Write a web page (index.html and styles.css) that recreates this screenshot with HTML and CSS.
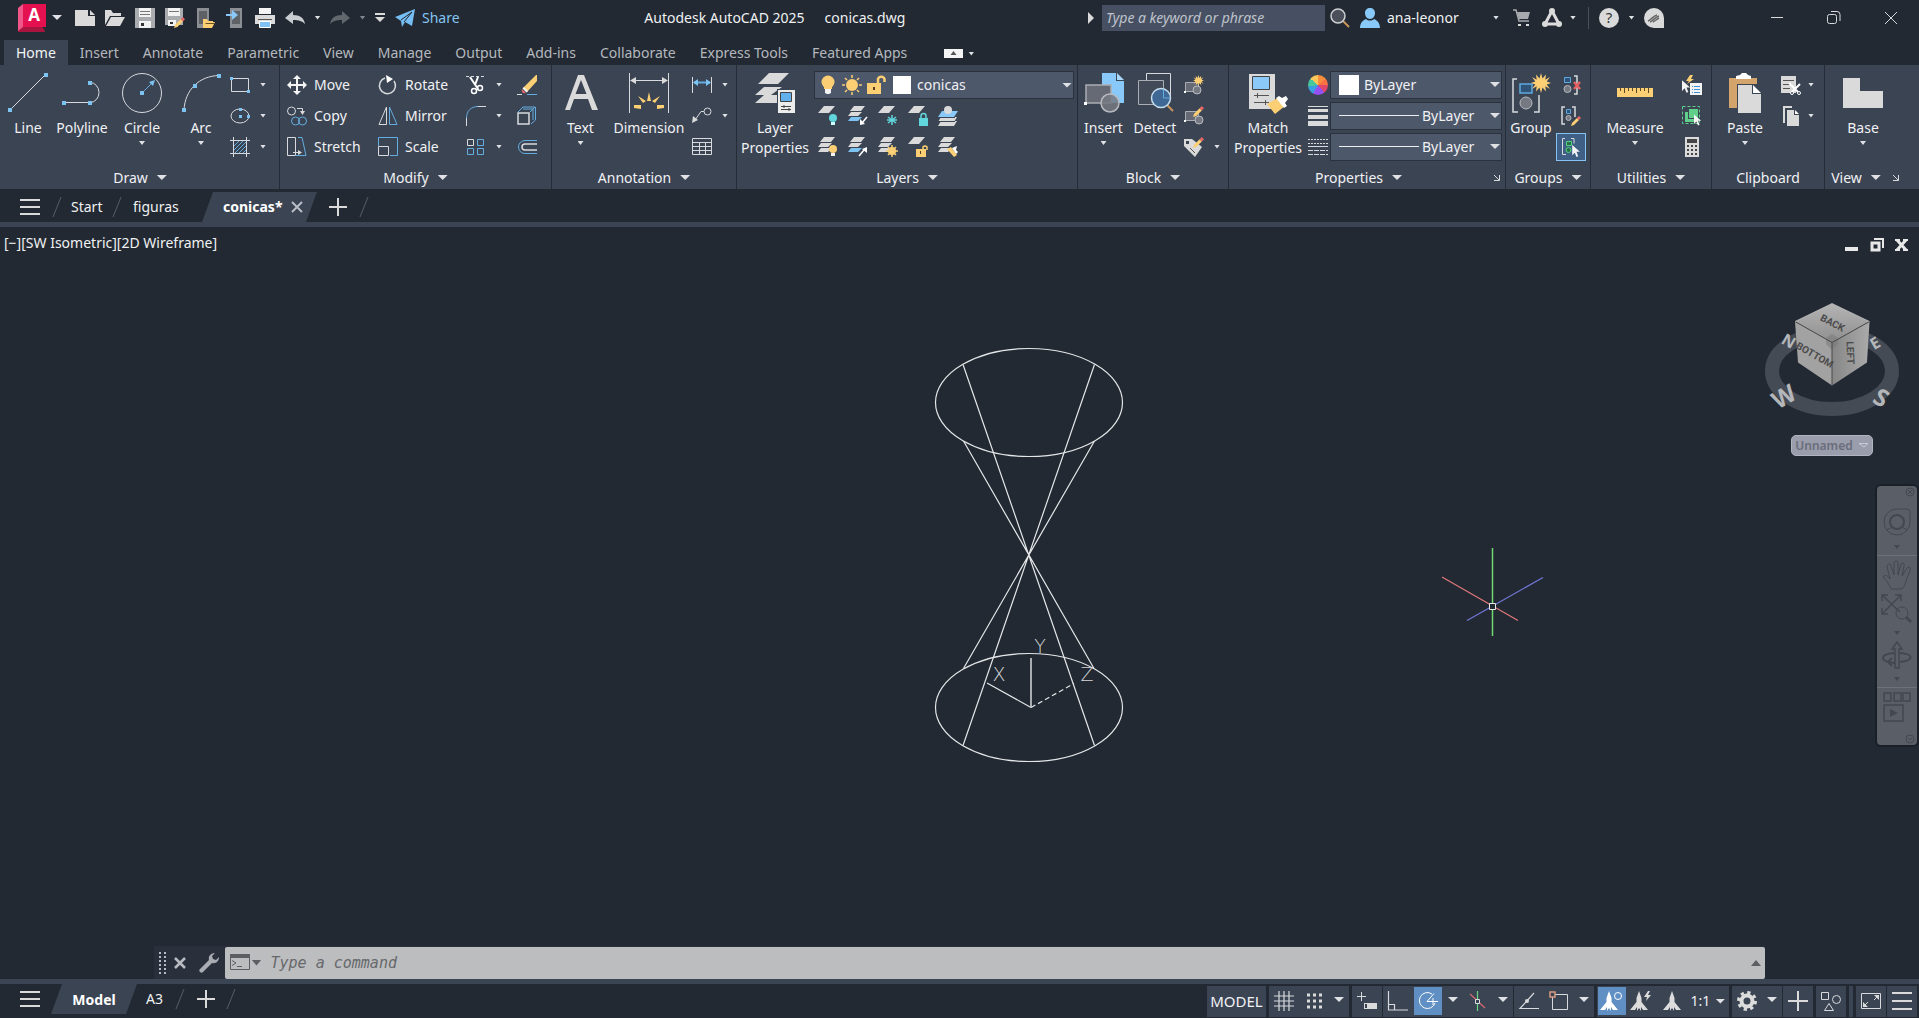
FILE: index.html
```html
<!DOCTYPE html>
<html lang="en">
<head>
<meta charset="utf-8">
<title>Autodesk AutoCAD 2025 - conicas.dwg</title>
<link rel="stylesheet" href="styles.css">
</head>
<body>
<svg class="sprite" aria-hidden="true">
  <symbol id="sheet" viewBox="0 0 20 20"><path class="fw" d="M6 0h11l-6 7H0z"/></symbol>
  <symbol id="stack" viewBox="0 0 20 20"><path class="fw" d="M6 0h11l-4 5H2zM3 6h11l-4 4H0zM3 11h11l-4 4H0z"/></symbol>
  <symbol id="stackb" viewBox="0 0 20 20"><path class="fw" d="M6 0h11l-4 5H2zM3 6h11l-4 4H0z"/><path class="fb" d="M3 11h11l-4 4H0z"/></symbol>
  <symbol id="pencil" viewBox="0 0 10 10"><path class="fy" d="M0 10l1-3 5-5 2 2-5 5z"/><path class="fr" d="M6 2l2-2 2 2-2 2z"/></symbol>
  <symbol id="star" viewBox="0 0 20 20"><path class="fy" d="M10 0l1.500 5.500L15 1.500l-.7 5.200L19 4l-3.300 4.500L20 10l-4.300 1.500L19 16l-4.700-2.700.7 5.200-3.500-4L10 20l-1.500-5.500-3.500 4 .7-5.200L1 16l3.300-4.500L0 10l4.300-1.500L1 4l4.700 2.700L5 1.500l3.500 4z"/></symbol>
  <symbol id="cursor" viewBox="0 0 10 14"><path fill="#f4f4f4" d="M0 0v12l3-3 2 5 2-1-2-5h4z"/></symbol>
  <symbol id="person" viewBox="0 0 20 20"><path class="fs" d="M10 0c3 0 5 2 5 5s-2 6-5 6-5-3-5-6 2-5 5-5zM0 20c0-5 3-8 6-9 2 2 6 2 8 0 3 1 6 4 6 9z"/></symbol>
  <symbol id="annot" viewBox="0 0 20 20"><path d="M10 0l2.500 7v4L19 19h-5l-2-3v4l-2-3-2 3v-4l-2 3H1l6.500-8V7z"/></symbol>
</svg>

<header class="titlebar">
  <button class="logo" aria-label="Application menu"><svg width="30" height="28"><path fill="#a8153e" d="M3 3L27 25l1 3-27 0z"/><path fill="#f0568a" d="M1 4l5-4v23l-5 4z"/><path fill="#e51050" d="M6 0h23v23H6z"/><text x="17" y="17" text-anchor="middle" class="logo-a">A</text></svg></button>
  <button class="dd logo-dd" aria-label="Menu options"><i class="caret mid"></i></button>
  <button class="qa" aria-label="New"><svg width="20" height="20"><path class="fw" d="M0 2h13v6h7v10H0z"/><path class="fw" d="M15 2l5 5h-5z"/></svg></button>
  <button class="qa" aria-label="Open"><svg width="20" height="20"><path class="fw" d="M0 17V2h6l2 3h8v3H5z"/><path class="fw" d="M6 9h14l-5 9H1z"/></svg></button>
  <button class="qa" aria-label="Save"><svg width="20" height="20"><path fill="#a9abae" d="M0 0h20v20H0z"/><path fill="#f2f2f2" d="M4 0h12v9H4z"/><path fill="#777" d="M5 3h10v1H5zM5 6h10v1H5z"/><path fill="#f2f2f2" d="M4 13h12v7H4z"/><path fill="#333" d="M6 15h3v3H6z"/></svg></button>
  <button class="qa" aria-label="Save as"><svg width="20" height="20"><path fill="#a9abae" d="M0 0h18v17H0z"/><path fill="#f2f2f2" d="M3 0h12v8H3z"/><path fill="#777" d="M4 3h10v1H4z"/><path fill="#f2f2f2" d="M3 12h8v6H3z"/><path fill="#333" d="M5 14h3v2H5z"/><use href="#pencil" x="9" y="9" width="11" height="11"/></svg></button>
  <button class="qa" aria-label="Open from web and mobile"><svg width="20" height="20"><path fill="#8b8e92" d="M2 0h12v20H2z"/><path fill="#5e6166" d="M4 3h8v13H4z"/><path class="fy" d="M8 11h4l1 2h5v1h2l-3 6H8z"/><path fill="#6b5020" d="M11 15h8v1h-9z"/></svg></button>
  <button class="qa" aria-label="Save to web and mobile"><svg width="20" height="20"><path fill="#8b8e92" d="M5 0h12v20H5z"/><path fill="#5e6166" d="M7 3h8v13H7z"/><path class="fs" d="M1 6h6V2l6 5-6 5V8H1z"/></svg></button>
  <button class="qa" aria-label="Plot"><svg width="20" height="20"><path fill="#f4f4f4" d="M4 0h12v6H4z"/><path class="fw" d="M0 7h20v9H0z"/><path fill="#555" d="M3 11h14v1H3z"/><path fill="#7fc1f5" stroke="#fff" d="M4.500 13.500h11v6h-11z"/></svg></button>
  <button class="qa" aria-label="Undo"><svg width="20" height="20"><path fill="#c9ccd0" d="M0 10l8-7v4c7 0 11 3 12 9-3-3-6-4-12-4v4z"/></svg></button>
  <button class="dd tight" aria-label="Undo list"><i class="caret"></i></button>
  <button class="qa" aria-label="Redo"><svg width="20" height="20"><path fill="#62676e" d="M20 10l-8-7v4C5 7 1 10 0 16c3-3 6-4 12-4v4z"/></svg></button>
  <button class="dd tight" aria-label="Redo list"><i class="caret dim"></i></button>
  <button class="dd" aria-label="Customize quick access"><svg width="10" height="10"><path class="fw" d="M0 0h10v2H0zM0 4h10L5 9z"/></svg></button>
  <button class="share"><svg width="20" height="20"><path fill="#75bdf3" d="M0 9L20 1l-3 17-7-4-3 5-1-6z"/><path fill="none" stroke="#222932" d="M6 12L17 4 9 14"/></svg>Share</button>
  <div class="doc-title"><span>Autodesk AutoCAD 2025</span><span>conicas.dwg</span></div>
  <button class="search-toggle" aria-label="Collapse search"><svg width="7" height="12"><path class="fw" d="M0 0l6 6-6 6z"/></svg></button>
  <input class="search" type="text" aria-label="Search" placeholder="Type a keyword or phrase">
  <button class="qa" aria-label="Find"><svg width="20" height="20"><path stroke="#c9965c" stroke-width="2" d="M13 13l6 6"/><circle cx="8" cy="8" r="7" fill="#4a4f59" stroke="#ced0d3" stroke-width="1.500"/></svg></button>
  <button class="user"><svg width="20" height="20"><use href="#person"/></svg><span>ana-leonor</span><i class="caret"></i></button>
  <button class="cart" aria-label="Store"><svg width="18" height="18"><path fill="none" stroke="#a7aaae" stroke-width="1.500" d="M0 1h3l3 11h10"/><path fill="#a7aaae" d="M4 3h13l-2 7H6z"/><path class="fw" d="M5 15h3v2H5zM13 15h3v2h-3z"/></svg></button>
  <button class="apps" aria-label="App store"><svg width="20" height="20"><path fill="none" stroke="#dcdcdc" stroke-width="3" stroke-linejoin="round" d="M10 3L3 16h14z"/><g class="fw"><circle cx="10" cy="3" r="3"/><circle cx="3" cy="16" r="3"/><circle cx="17" cy="16" r="3"/></g></svg><i class="caret"></i></button>
  <span class="sep"></span>
  <button class="qa" aria-label="Help"><svg width="20" height="20"><circle cx="10" cy="10" r="10" class="fw"/><text x="10" y="15" text-anchor="middle" class="help-q">?</text></svg></button>
  <button class="dd tight" aria-label="Help list"><i class="caret"></i></button>
  <button class="qa" aria-label="Assistant"><svg width="20" height="20"><path class="fw" d="M10 0a10 10 0 0 1 10 10v10H10a10 10 0 0 1 0-20z"/><path fill="none" stroke="#666" stroke-width="1.500" d="M4 13c3-1 5-5 9-6M6 14c3-1 5-5 9-6M9 14c2-1 4-3 6-4"/></svg></button>
  <span class="grow"></span>
  <button class="win" aria-label="Minimize"><svg width="14" height="14"><path class="w" d="M1 6.500h12"/></svg></button>
  <button class="win" aria-label="Restore"><svg width="14" height="14"><rect class="w" x=".5" y="3.500" width="9" height="9" rx="2"/><path class="w" d="M4 .5h6a3 3 0 0 1 3 3V10"/></svg></button>
  <button class="win" aria-label="Close"><svg width="14" height="14"><path class="w" d="M1 1l12 12M13 1L1 13"/></svg></button>
</header>

<nav class="tabs">
  <a href="#" class="on">Home</a><a href="#">Insert</a><a href="#">Annotate</a><a href="#">Parametric</a><a href="#">View</a><a href="#">Manage</a><a href="#">Output</a><a href="#">Add-ins</a><a href="#">Collaborate</a><a href="#">Express Tools</a><a href="#">Featured Apps</a>
  <button class="ribbon-toggle" aria-label="Minimize ribbon"><svg width="19" height="9"><path fill="#f4f4f4" d="M0 0h19v9H0z"/><path fill="#555" d="M9.500 2l3 4h-6z"/></svg><i class="caret"></i></button>
</nav>

<main class="ribbon">
  <section class="panel draw">
    <div class="body">
      <button class="big"><svg width="40" height="40"><path class="w" d="M2 37L37 2"/><path class="fb" d="M0 35h4v4H0zM36 0h4v4h-4z"/></svg><span>Line</span></button>
      <button class="big"><svg width="40" height="40"><path class="w" d="M2 29.500h26a9 10 0 0 0 0-20"/><path class="fb" d="M0 28h4v4H0zM26 28h4v4h-4zM26 8h4v4h-4z"/></svg><span>Polyline</span></button>
      <button class="big"><svg width="40" height="40"><circle class="w" cx="20" cy="20" r="19.500"/><path class="b" d="M20 20L31 9"/><path class="fb" d="M18 18h4v4h-4zM27 9l6-2-2 6z"/></svg><span>Circle</span><i class="caret"></i></button>
      <button class="big"><svg width="40" height="40"><path class="w" d="M3 37C4 17 18 3 38 2.500"/><path class="fb" d="M1 35h4v4H1zM12 11h4v4h-4zM36 1h4v4h-4z"/></svg><span>Arc</span><i class="caret"></i></button>
      <div class="stackcol">
        <div class="row"><button class="ib" aria-label="Rectangle"><svg width="20" height="20"><path class="w" d="M1.500 3.500h17v13h-17z"/><path class="fb" d="M0 2h3v3H0zM17 15h3v3h-3z"/></svg></button><button class="dd" aria-label="Rectangle list"><i class="caret"></i></button></div>
        <div class="row"><button class="ib" aria-label="Ellipse"><svg width="20" height="20"><ellipse class="w" cx="10" cy="10" rx="9" ry="7"/><path class="fb" d="M9 9h3v3H9zM9 2h3v3H9zM17 9h3v3h-3z"/></svg></button><button class="dd" aria-label="Ellipse list"><i class="caret"></i></button></div>
        <div class="row"><button class="ib" aria-label="Hatch"><svg width="20" height="20"><path class="w" d="M3.500 0v20M16.500 0v20M0 3.500h20M0 16.500h20"/><path class="b" d="M4 9l5-5M4 13l9-9M5 16L16 5M9 16l7-7M13 16l3-3"/></svg></button><button class="dd" aria-label="Hatch list"><i class="caret"></i></button></div>
      </div>
    </div>
    <footer><button class="ttl">Draw<i class="caret wide"></i></button></footer>
  </section>

  <section class="panel modify">
    <div class="body">
      <button class="lb"><svg width="20" height="20"><path fill="#f4f4f4" d="M10 0l4 4h-3v5h5V6l4 4-4 4v-3h-5v5h3l-4 4-4-4h3v-5H4v3l-4-4 4-4v3h5V4H6z"/></svg>Move</button>
      <button class="lb"><svg width="20" height="20"><path class="w" stroke-width="1.500" d="M7 3a8 8 0 1 0 9 3"/><path fill="#fff" d="M8 0l7 4-6 4z"/></svg>Rotate</button>
      <button class="ib s" aria-label="Trim"><svg width="20" height="20"><path class="w" stroke-dasharray="3 2" d="M0 1.500h20"/><path fill="none" stroke="#fff" stroke-width="2" d="M4 2l8 12M12 2l-3 8"/><circle fill="none" stroke="#fff" stroke-width="1.500" cx="8" cy="16" r="2.500"/><circle fill="none" stroke="#fff" stroke-width="1.500" cx="14" cy="13" r="2.500"/></svg></button>
      <button class="dd" aria-label="Trim list"><i class="caret"></i></button>
      <button class="ib s" aria-label="Erase"><svg width="20" height="20"><path class="w" d="M0 19.500h5"/><path class="b" d="M10 19.500h10"/><path class="fy" d="M19 0h1v6L10 17l-4-4z"/><path fill="#f4f4f4" d="M7 12l4 4-1.500 1.500-4-4z"/><path class="fr" d="M5 14l4 4c-3 1-5-1-4-4z"/></svg></button>
      <button class="lb"><svg width="20" height="20"><circle class="w" cx="4.500" cy="5" r="4"/><path class="w" d="M10 2.500h5.500V7"/><path class="fw" d="M13 5h5l-2.500 4z"/><circle class="b" cx="8.500" cy="15" r="4"/><circle class="b" cx="15.500" cy="15" r="4"/></svg>Copy</button>
      <button class="lb"><svg width="20" height="20"><path class="w" d="M8.500 1v17.500H1z"/><path class="b" d="M11.500 1v17.500H19z"/></svg>Mirror</button>
      <button class="ib s" aria-label="Fillet"><svg width="20" height="20"><path class="w" d="M.5 20v-8M10 .5h10"/><path class="b" d="M.5 12C.5 5 5 .5 12 .5"/></svg></button>
      <button class="dd" aria-label="Fillet list"><i class="caret"></i></button>
      <button class="ib s" aria-label="Explode"><svg width="20" height="20"><path class="w" stroke-width="1.500" d="M1 7h11v11H1z"/><path class="b" d="M1 6l5-5h12l-5 5M6 3h10M18.500 1v13L14 18M16 3v11"/></svg></button>
      <button class="lb"><svg width="20" height="20"><path class="w" d="M.5 18.500V.5h8v18zM6 15.500h7"/><path class="b" d="M11 .5h4l4 18H8.500"/><path class="fw" d="M11 13l4 2.500-4 2.500z"/></svg>Stretch</button>
      <button class="lb"><svg width="20" height="20"><path class="b" d="M.5 9V.5h19v18H12"/><path class="w" d="M.5 9.500h10v9H.5z"/></svg>Scale</button>
      <button class="ib s" aria-label="Array"><svg width="20" height="20"><path class="w" d="M1.500 2.500h6v6h-6z"/><path class="b" d="M11.500 2.500h6v6h-6zM1.500 11.500h6v6h-6zM11.500 11.500h6v6h-6z"/></svg></button>
      <button class="dd" aria-label="Array list"><i class="caret"></i></button>
      <button class="ib s" aria-label="Offset"><svg width="20" height="20"><path class="b" d="M20 3.500H8a6.500 6.500 0 0 0 0 13h12"/><path class="w" stroke-width="1.500" d="M20 7H8a3 3 0 0 0 0 6h12"/></svg></button>
    </div>
    <footer><button class="ttl">Modify<i class="caret wide"></i></button></footer>
  </section>

  <section class="panel annotation">
    <div class="body">
      <button class="big"><svg width="40" height="40"><path class="fw" d="M17 2h6l14 35h-6l-4-11H13L9 37H4zM14.500 21h11L20 7z"/></svg><span>Text</span><i class="caret"></i></button>
      <button class="big"><svg width="40" height="40"><path class="w" d="M.5 0v40M39.500 0v40M3 7.500h34"/><path class="fw" d="M1 7.500L7 4v7zM39 7.500L33 4v7z"/><path class="fy" d="M18 28l2-9 2 9zM14 30l-5-7 8 5zM26 30l5-7-8 5zM12 32l-7 0 0 3 7 1zM28 32l7 0 0 3-7 1z"/></svg><span>Dimension</span></button>
      <div class="stackcol">
        <div class="row"><button class="ib" aria-label="Linear"><svg width="20" height="20"><path class="w" d="M.5 2v16M19.500 2v16"/><path class="b" stroke-width="2" d="M2 7.500h16"/><path class="fb" d="M1 7.500L6 4v7zM19 7.500L14 4v7z"/></svg></button><button class="dd" aria-label="Linear list"><i class="caret"></i></button></div>
        <div class="row"><button class="ib" aria-label="Leader"><svg width="20" height="20"><circle class="w" cx="15.500" cy="5.500" r="3.500"/><path class="w" d="M12 5.500H9L3 14"/><path class="fw" d="M0 17l1-7 5 4z"/></svg></button><button class="dd" aria-label="Leader list"><i class="caret"></i></button></div>
        <div class="row"><button class="ib" aria-label="Table"><svg width="20" height="20"><path class="w" d="M.5 1.500h19v16H.5zM0 5.500h20M0 9.500h20M0 13.500h20M7.500 5v13M13.500 5v13"/></svg></button></div>
      </div>
    </div>
    <footer><button class="ttl">Annotation<i class="caret wide"></i></button></footer>
  </section>

  <section class="panel layers">
    <div class="body">
      <button class="big"><svg width="40" height="40"><path class="fw" d="M14 0h20L23 11H3zM9 14h18L16 22H0zM9 22h15v8H0z"/><path fill="#3b4453" d="M22 16h18v24H22z"/><path fill="#ececec" d="M23 17h17v23H23z"/><path fill="#62b0ee" stroke="#444" d="M25.500 19.500h11v9h-11z"/><path stroke="#444" d="M26 33.500h10M26 36.500h10M29 32v3M34 35v3"/></svg><span>Layer<br>Properties</span></button>
      <div class="layer-tools">
        <label class="combo"><svg width="88" height="24"><circle class="fy" cx="10" cy="9" r="6.500"/><path class="fy" d="M6 12h8v4H6z"/><path fill="#f4f4f4" d="M7 16h6v4l-2 1H9l-2-1z"/><circle class="fy" cx="34" cy="12" r="6"/><path stroke="#fccf74" stroke-width="1.500" d="M34 2v3M34 19v3M24 12h3M41 12h3M27 5l2 2M39 17l2 2M41 5l-2 2M29 17l-2 2"/><path class="fy" d="M49 10h14v11H49z"/><path fill="none" stroke="#fccf74" stroke-width="2.500" d="M60 10V6a3.500 3.500 0 0 1 6.500 0v3"/><path stroke="#554020" stroke-width="2" d="M56 14v3"/></svg><i class="chip"></i><select aria-label="Layer"><option>conicas</option></select><i class="caret wide"></i></label>
        <div class="layer-icons">
          <button aria-label="Off"><svg width="20" height="20"><use href="#sheet"/><circle fill="#61d5dc" cx="15" cy="12" r="4"/><path fill="#cff" d="M13 16h4v3h-4z"/></svg></button>
          <button aria-label="Isolate"><svg width="20" height="20"><use href="#stackb"/><path stroke="#fff" stroke-width="1.500" d="M19 11l-5 6"/><path fill="#fff" d="M12 19v-6l5 5z"/></svg></button>
          <button aria-label="Freeze"><svg width="20" height="20"><use href="#sheet"/><path stroke="#61d5dc" stroke-width="1.500" d="M14 9v10M10 11l8 6M18 11l-8 6M9 14h10"/></svg></button>
          <button aria-label="Lock"><svg width="20" height="20"><use href="#sheet"/><path fill="#61d5dc" d="M11 12h9v8h-9z"/><path fill="none" stroke="#61d5dc" stroke-width="1.500" d="M13 12v-2a2.500 2.500 0 0 1 5 0v2"/></svg></button>
          <button aria-label="Make current"><svg width="20" height="20"><path class="fw" d="M3 11h16l-3 5H0zM3 15h16l-3 5H0z"/><path class="fs" d="M4 5h16l-4 6H0z"/><path stroke="#3b4453" d="M0 11.500h17M0 15.500h17"/><circle class="fw" cx="10" cy="4" r="4"/></svg></button>
          <button aria-label="Turn all on"><svg width="20" height="20"><use href="#stack"/><circle class="fy" cx="15" cy="12" r="4"/><path fill="#f4f4f4" d="M13 16h4v3h-4z"/></svg></button>
          <button aria-label="Unisolate"><svg width="20" height="20"><use href="#stackb"/><path stroke="#fff" stroke-width="1.500" d="M11 19l5-6"/><path fill="#fff" d="M19 10v6l-5-4z"/></svg></button>
          <button aria-label="Thaw"><svg width="20" height="20"><use href="#stack"/><circle class="fy" cx="14" cy="14" r="4"/><path stroke="#fccf74" stroke-width="1.500" d="M14 8v12M8 14h12M10 10l8 8M18 10l-8 8"/></svg></button>
          <button aria-label="Unlock"><svg width="20" height="20"><use href="#sheet"/><path class="fy" d="M8 12h10v8H8z"/><path fill="none" stroke="#fccf74" stroke-width="1.500" d="M15 12v-2a2.500 2.500 0 0 1 4 0v3"/><path stroke="#554020" d="M12.500 14v3"/></svg></button>
          <button aria-label="Match layer"><svg width="20" height="20"><use href="#stack"/><path class="fy" d="M9 12l4-2 6 8-3 2z"/><path fill="#fff" d="M14 11l5-2-1 4 2 2-2 2z"/></svg></button>
        </div>
      </div>
    </div>
    <footer><button class="ttl">Layers<i class="caret wide"></i></button></footer>
  </section>

  <section class="panel block">
    <div class="body">
      <button class="big"><svg width="40" height="40"><path class="fs" d="M18 0h14v8h8v22H18z"/><path fill="#a9d8fb" d="M33 0l7 7h-7z"/><path fill="#656a75" stroke="#aaadb3" stroke-width="1.500" d="M2 12h25v18H2z"/><path fill="#fff" d="M0 29h3v3H0z"/><circle fill="#757981" fill-opacity=".85" stroke="#b8babf" stroke-width="1.500" cx="26" cy="30" r="9"/></svg><span>Insert</span><i class="caret"></i></button>
      <button class="big"><svg width="40" height="40"><path class="w" d="M11.500 8V.5h24v24"/><path fill="#434a58" stroke="#aaadb3" d="M3.500 7.500h25v24h-25z"/><path stroke="#c9965c" stroke-width="2" d="M32 32l6 6"/><circle fill="#3f6994" stroke="#c5dcee" stroke-width="1.500" cx="26" cy="25" r="9.500"/><path class="b" d="M28.500 16v9H35"/></svg><span>Detect</span></button>
      <div class="stackcol">
        <div class="row"><button class="ib" aria-label="Create block"><svg width="20" height="20"><path fill="#656a75" stroke="#aaadb3" d="M1.500 7.500h13v9h-13z"/><path fill="#fff" d="M0 16h2v2H0z"/><use href="#star" x="9" y="0" width="11" height="11"/><circle fill="#757981" stroke="#b8babf" cx="13" cy="15" r="4"/></svg></button></div>
        <div class="row"><button class="ib" aria-label="Edit block"><svg width="20" height="20"><path fill="#656a75" stroke="#aaadb3" d="M1.500 5.500h13v9h-13z"/><path fill="#fff" d="M0 14h2v2H0z"/><circle fill="#757981" stroke="#b8babf" cx="15" cy="14" r="4"/><use href="#pencil" x="9" y="0" width="11" height="11"/></svg></button></div>
        <div class="row"><button class="ib" aria-label="Edit attributes"><svg width="20" height="20"><path class="fw" d="M0 2h8l10 8-7 10L0 9z"/><path fill="#3b4453" d="M2 4h3v3H2z"/><path stroke="#555" d="M6 11l5 5"/><use href="#pencil" x="9" y="0" width="11" height="11"/></svg></button><button class="dd" aria-label="Attribute list"><i class="caret"></i></button></div>
      </div>
    </div>
    <footer><button class="ttl">Block<i class="caret wide"></i></button></footer>
  </section>

  <section class="panel properties">
    <div class="body">
      <button class="big"><svg width="40" height="40"><path class="fw" d="M1 1h26v35H1z"/><path fill="#8bcaf8" stroke="#444" d="M4.500 3.500h17v13h-17z"/><path stroke="#555" d="M6 22.500h15M6 29.500h15M9.500 20v5M17.500 27v5"/><path class="fy" d="M19 31l11-6 7 8-10 8z"/><path fill="#fff" d="M28 25l3-2 3 2 4-2 2 3-3 4 2 3-3 2z"/></svg><span>Match<br>Properties</span></button>
      <div class="stackcol">
        <div class="row"><i class="wheel"></i><label class="combo prop"><i class="chip"></i><select aria-label="Object color"><option>ByLayer</option></select><i class="caret wide"></i></label></div>
        <div class="row"><svg class="pi" width="20" height="20"><path class="fw" d="M0 0h20v1H0zM0 3h20v3H0zM0 9h20v4H0zM0 15h20v5H0z"/></svg><label class="combo prop"><i class="rule"></i><select aria-label="Lineweight"><option>ByLayer</option></select><i class="caret wide"></i></label></div>
        <div class="row"><svg class="pi" width="20" height="20"><path class="w" stroke-dasharray="2 1" d="M0 2.500h20M0 6.500h20"/><path class="w" d="M0 9.500h20"/><path class="w" stroke-dasharray="5 1" d="M0 13.500h20M0 17.500h20"/></svg><label class="combo prop"><i class="rule"></i><select aria-label="Linetype"><option>ByLayer</option></select><i class="caret wide"></i></label></div>
      </div>
    </div>
    <footer><button class="ttl">Properties<i class="caret wide"></i></button><button class="launch" aria-label="Properties dialog"><svg width="6" height="6"><path class="w" d="M0 0l5 5M5.500 0v5.500H0"/></svg></button></footer>
  </section>

  <section class="panel groups">
    <div class="body">
      <button class="big"><svg width="40" height="40"><path class="w" stroke-width="1.500" d="M6 6H2v33h5M23 39h5V22"/><path fill="#2f5478" stroke="#5ea9de" stroke-width="1.500" d="M9 11h12v9H9z"/><circle fill="#757981" stroke="#b8babf" cx="15" cy="30" r="6"/><use href="#star" x="20" y="0" width="20" height="20"/></svg><span>Group</span></button>
      <div class="stackcol">
        <div class="row"><button class="ib" aria-label="Ungroup"><svg width="20" height="20"><path class="w" stroke-width="1.500" d="M13 1h3v18h-3"/><path fill="#2f5478" stroke="#5ea9de" d="M3.500 2.500h6v5h-6z"/><circle fill="#757981" stroke="#b8babf" cx="6.500" cy="14" r="3.500"/><path stroke="#e66060" stroke-width="2.500" d="M13 7l6 7M19 7l-6 7"/></svg></button></div>
        <div class="row"><button class="ib" aria-label="Group edit"><svg width="20" height="20"><path class="w" stroke-width="1.500" d="M4 1H1v17h3M11 1h3v10"/><path fill="#2f5478" stroke="#5ea9de" d="M5.500 3.500h4v4h-4z"/><circle fill="#757981" stroke="#b8babf" cx="7.500" cy="12" r="2.500"/><use href="#pencil" x="10" y="10" width="10" height="10"/></svg></button></div>
        <div class="row"><button class="ib active" aria-label="Group selection on/off" aria-pressed="true"><svg width="20" height="20"><path class="w" d="M4 1.500H1.500v16H5M10 1.500h3v5"/><path fill="#2c6f4b" stroke="#4fd37e" d="M5.500 4.500h5v4h-5z"/><circle fill="#2c6f4b" stroke="#4fd37e" cx="7.500" cy="13" r="2.500"/><use href="#cursor" x="11" y="8" width="9" height="12"/></svg></button></div>
      </div>
    </div>
    <footer><button class="ttl">Groups<i class="caret wide"></i></button></footer>
  </section>

  <section class="panel utilities">
    <div class="body">
      <button class="big"><svg width="40" height="40"><path class="fy" d="M2 15h36v9H2z"/><path stroke="#5b4a28" d="M5.500 15v3M9.500 15v5M13.500 15v3M17.500 15v3M21.500 15v5M25.500 15v3M29.500 15v3M33.500 15v5"/></svg><span>Measure</span><i class="caret"></i></button>
      <div class="stackcol">
        <div class="row"><button class="ib" aria-label="Quick select"><svg width="20" height="20"><path class="fy" d="M8 0l-4 6h3L5 9l7-5H9l2-4z"/><path fill="#f4f4f4" d="M8 8h12v12H8z"/><path stroke="#3b8fd6" d="M10 11.500h1M12 11.500h6M10 14.500h1M12 14.500h6M10 17.500h1M12 17.500h6"/><use href="#cursor" x="0" y="5" width="9" height="13"/></svg></button></div>
        <div class="row"><button class="ib" aria-label="Select similar"><svg width="20" height="20"><path fill="none" stroke="#5fcf8a" stroke-dasharray="3 2" d="M.5.500h17v17H.5z"/><path fill="#5fcf8a" d="M7 3h9v9H7zM3 6h3v7h7v3H3z"/><use href="#cursor" x="12" y="8" width="8" height="12"/></svg></button></div>
        <div class="row"><button class="ib" aria-label="Quick calculator"><svg width="20" height="20"><path class="fw" d="M3 0h14v20H3z"/><path fill="#444" d="M5 2h10v4H5zM5 8h2v2H5zM9 8h2v2H9zM13 8h2v2h-2zM5 12h2v2H5zM9 12h2v2H9zM13 12h2v2h-2zM5 16h2v2H5zM9 16h2v2H9zM13 16h2v2h-2z"/></svg></button></div>
      </div>
    </div>
    <footer><button class="ttl">Utilities<i class="caret wide"></i></button></footer>
  </section>

  <section class="panel clipboard">
    <div class="body">
      <button class="big"><svg width="40" height="40"><path fill="#d3a56d" d="M4 5h28v30H4z"/><path fill="#fff" d="M11 6V3l4-1 2-2h4l2 2 3 1v3z"/><path fill="#3b4453" d="M12 11h25v29H12z"/><path class="fw" d="M13 12h14v9h9v19H13z"/><path fill="#fff" d="M28 12l8 8h-8z"/></svg><span>Paste</span><i class="caret"></i></button>
      <div class="stackcol">
        <div class="row"><button class="ib" aria-label="Cut"><svg width="20" height="20"><path class="fw" d="M0 1h15v17H0z"/><path stroke="#555" d="M2 5.500h11M2 9.500h9M2 13.500h7"/><path stroke="#fff" stroke-width="2" d="M8 8l9 9M19 9l-9 9"/><circle fill="#3b4453" stroke="#fff" cx="11" cy="18" r="1.500"/><circle fill="#3b4453" stroke="#fff" cx="18" cy="18" r="1.500"/></svg></button><button class="dd" aria-label="Cut list"><i class="caret"></i></button></div>
        <div class="row"><button class="ib" aria-label="Copy clip"><svg width="20" height="20"><path class="fw" d="M2 0h9v2H4v15H2z"/><path class="fw" d="M6 4h7v5h5v11H6z"/><path fill="#fff" d="M14 4l4 4h-4z"/></svg></button><button class="dd" aria-label="Copy list"><i class="caret"></i></button></div>
      </div>
    </div>
    <footer><span class="ttl">Clipboard</span></footer>
  </section>

  <section class="panel view">
    <div class="body">
      <button class="big"><svg width="40" height="40"><path class="fw" d="M0 5h17v13h23v17H0z"/></svg><span>Base</span><i class="caret"></i></button>
    </div>
    <footer><button class="ttl">View<i class="caret wide"></i></button><button class="launch" aria-label="View dialog"><svg width="6" height="6"><path class="w" d="M0 0l5 5M5.500 0v5.500H0"/></svg></button></footer>
  </section>
</main>

<nav class="filetabs">
  <button class="burger" aria-label="File tab menu"><svg width="20" height="16"><path class="fw" d="M0 0h20v2H0zM0 7h20v2H0zM0 14h20v2H0z"/></svg></button>
  <svg class="slash" width="10" height="20"><path d="M9 0L1 20"/></svg>
  <a href="#" class="start">Start</a>
  <svg class="slash" width="10" height="20"><path d="M9 0L1 20"/></svg>
  <a href="#" class="fig">figuras</a>
  <div class="current"><a href="#">conicas*</a><button aria-label="Close tab"><svg width="10" height="10"><path stroke="#b9bec6" stroke-width="2" d="M0 0l10 10M10 0L0 10"/></svg></button></div>
  <button class="plus" aria-label="New drawing"><svg width="18" height="18"><path class="fw" d="M8 0h2v8h8v2h-8v8H8v-8H0V8h8z"/></svg></button>
  <svg class="slash" width="10" height="20"><path d="M9 0L1 20"/></svg>
</nav>

<section class="viewport">
  <div class="vp-head">
    <div class="vp-label">[−][SW Isometric][2D Wireframe]</div>
    <div class="vp-win">
      <button aria-label="Minimize viewport"><svg width="14" height="14"><path fill="#e8e8e8" d="M0 9h13v4H0z"/></svg></button>
      <button aria-label="Restore viewport"><svg width="14" height="14"><path fill="none" stroke="#e8e8e8" stroke-width="3" d="M2 5h7v7H2z"/><path fill="none" stroke="#e8e8e8" stroke-width="2" d="M4 1h9v9"/></svg></button>
      <button aria-label="Close viewport"><svg width="14" height="14"><path fill="none" stroke="#e8e8e8" stroke-width="3" d="M2 2l9 10M11 2L2 12"/><path fill="none" stroke="#e8e8e8" stroke-width="2" d="M0 2h5M8 2h5M0 12h5M8 12h5"/></svg></button>
    </div>
  </div>

  <svg class="cones" width="190" height="416" viewBox="934 347 190 416">
    <g fill="none" stroke="#e4e6e8" stroke-width="1.200">
      <ellipse cx="1029" cy="402.500" rx="93.500" ry="54"/>
      <ellipse cx="1029" cy="707.500" rx="93.500" ry="54"/>
      <path d="M963 364.500L1094.500 745.500M1094.500 364.500L963 745.500M963.500 441L1094 668.500M1094.500 441L963.500 668.500"/>
      <path d="M987 683l44 24.500"/><path stroke-width="2" stroke="#a9adb2" d="M1031 707V658"/><path stroke-dasharray="5 3" d="M1031 707.500l43-24"/>
    </g>
    <g class="axis"><text x="999" y="681">X</text><text x="1040" y="653">Y</text><text x="1087" y="681">Z</text></g>
  </svg>

  <svg class="crosshair" width="104" height="90" viewBox="1441 547 104 90">
    <path stroke="#e0787c" stroke-width="1.200" d="M1442 577l76 43.500"/><path stroke="#7377d8" stroke-width="1.200" d="M1467 620.500l76-43"/><path stroke="#72d873" stroke-width="1.500" d="M1492.500 548v88"/><path fill="#222932" stroke="#e8e8e8" d="M1489.500 603.500h6v6h-6z"/>
  </svg>

  <div class="viewcube">
    <svg width="150" height="130" viewBox="1757 295 150 130" role="img" aria-label="View cube">
      <defs><linearGradient id="f1" x1="0" y1="0" x2="0" y2="1"><stop offset="0" stop-color="#b4b4b4"/><stop offset="1" stop-color="#8f8f8f"/></linearGradient><linearGradient id="f2"><stop offset="0" stop-color="#868686"/><stop offset="1" stop-color="#aaa"/></linearGradient></defs>
      <ellipse cx="1832" cy="371" rx="60" ry="38" fill="none" stroke="#444b55" stroke-width="14"/>
      <g class="compass"><text transform="translate(1786 346) rotate(30)">N</text><text transform="translate(1878 348) rotate(-30)">E</text><text class="near" transform="translate(1788 404) rotate(-30)">W</text><text class="near" transform="translate(1877 405) rotate(30)">S</text></g>
      <path fill="url(#f1)" d="M1832 303.500l37.500 18-37.500 21-37-21z"/>
      <path fill="#a2a2a2" d="M1795 321.500l37 21v43l-34-23z"/>
      <path fill="url(#f2)" d="M1869.500 321.500l-37.500 21v43l35-23z"/>
      <path fill="#777" fill-opacity=".5" d="M1832 334l6 4v6l-6 6-6-6v-6z"/>
      <path fill="none" stroke="#4a4a4a" d="M1795 321.500l37 21 37.500-21M1832 342.500v43"/>
      <path fill="none" stroke="#c9c9c9" stroke-width=".7" d="M1832 303.500l37.500 18M1795 321.500l37-18"/>
      <g class="face"><text transform="translate(1831 326) rotate(28)">BACK</text><text transform="translate(1813 358) rotate(30)">BOTTOM</text><text transform="translate(1847 353) rotate(88)">LEFT</text></g>
    </svg>
    <button class="unnamed">Unnamed<svg width="10" height="5"><path fill="none" stroke="#c8cad4" d="M0 .5h9L5 4z"/></svg></button>
  </div>

  <aside class="navbar">
    <svg class="knob" width="10" height="10"><circle class="n" cx="5" cy="5" r="4"/><path class="n" d="M3 3l4 4M7 3L3 7"/></svg>
    <button class="wheelnav" aria-label="Steering wheel"><svg width="28" height="28"><path class="n" d="M14 1h10a3 3 0 0 1 3 3v10a13 13 0 1 1-13-13zM4 22l5-3M24 22l-5-3"/><circle class="n" stroke-width="2" cx="14" cy="14" r="7"/></svg><i class="caret dark"></i></button>
    <button class="pan" aria-label="Pan"><svg width="28" height="30"><path class="n" d="M8 29C6 24 3 20 0 17c2-3 5-1 7 2L4 6c1-3 4-2 4 0l3 9V3c1-3 4-3 4 0v12l3-11c2-2 4 0 3 2l-2 10 5-8c3-2 4 0 3 2l-4 11c-1 4-2 6-4 8z"/></svg></button>
    <button class="zoomext" aria-label="Zoom extents"><svg width="30" height="28"><path class="n" stroke-width="1.500" d="M1 1l17 16M18 1L1 18M0 6V0h6M13 0h6v6M0 13v6h6"/><circle class="n" cx="20" cy="18" r="6"/><path class="n" stroke-width="3" d="M24 22l5 5"/></svg><i class="caret dark"></i></button>
    <button class="orbit" aria-label="Orbit"><svg width="28" height="28"><path class="n" stroke-width="1.500" d="M12 27V8H9l5-7 5 7h-3v19z"/><path class="n" stroke-width="2" d="M12 22C-4 21-4 13 11 12M17 21c14-2 14-8 0-9M9 17l-4 4 4 4"/></svg><i class="caret dark"></i></button>
    <button class="motion" aria-label="Show motion"><svg width="28" height="30"><path class="n" stroke-width="1.500" d="M1 1h7v8H1zM11 1h7v8h-7zM20 1h7v8h-7zM1 13h19v16H1z"/><path fill="#43484f" d="M7 17l8 4-8 4z"/></svg></button>
    <svg class="knob" width="10" height="10"><circle class="n" cx="5" cy="5" r="4"/><path class="n" d="M3 4l2 2 2-2"/></svg>
  </aside>

  <div class="command">
    <svg class="grip" width="7" height="22"><path stroke="#b8bcc2" stroke-width="2" stroke-dasharray="2 2" d="M1 0v22M6 0v22"/></svg>
    <button class="cx" aria-label="Close command line"><svg width="12" height="12"><path stroke="#b8bcc2" stroke-width="2.500" d="M1 1l10 10M11 1L1 11"/></svg></button>
    <button class="cw" aria-label="Customize"><svg width="20" height="20"><path fill="#a9adb3" d="M1 19c-1-1-1-2 0-3l9-9C9 3 12 0 16 0l-3 3 1 3 3 1 3-3c0 4-3 7-7 6l-9 9c-1 1-2 1-3 0z"/></svg></button>
    <div class="cmdbox"><button aria-label="Recent commands"><svg width="20" height="17"><path fill="none" stroke="#5c5e61" d="M.5.500h19v15H.5z"/><path fill="#5c5e61" d="M0 0h20v4H0z"/><path fill="none" stroke="#5c5e61" d="M2 6.500l4 2.500-4 2.500M7 12.500h5"/></svg><i class="caret cmdc"></i></button><input type="text" aria-label="Command" placeholder="Type a command"><button class="up" aria-label="Command history"><svg width="10" height="6"><path fill="#5c5e61" d="M5 0l5 6H0z"/></svg></button></div>
  </div>
</section>

<footer class="statusbar">
  <button class="burger" aria-label="Layout menu"><svg width="20" height="16"><path class="fw" d="M0 0h20v2H0zM0 7h20v2H0zM0 14h20v2H0z"/></svg></button>
  <a href="#" class="model-tab">Model</a>
  <a href="#" class="a3">A3</a>
  <svg class="slash" width="10" height="20"><path d="M9 0L1 20"/></svg>
  <button class="plus" aria-label="New layout"><svg width="18" height="18"><path class="fw" d="M8 0h2v8h8v2h-8v8H8v-8H0V8h8z"/></svg></button>
  <svg class="slash" width="10" height="20"><path d="M9 0L1 20"/></svg>
  <span class="grow"></span>
  <div class="sg"><button class="model">MODEL</button></div>
  <div class="sg"><button aria-label="Grid"><svg width="20" height="20"><path class="w" stroke-width="1.200" d="M5 0v20M10 0v20M15 0v20M0 5h20M0 10h20M0 15h20"/></svg></button><button aria-label="Snap"><svg width="20" height="20"><path stroke="#dcdcdc" stroke-width="3" stroke-dasharray="3 3" d="M3 4h15M3 10h15M3 16h15"/></svg></button><button class="dd" aria-label="Snap list"><i class="caret wide"></i></button></div>
  <div class="sg"><button aria-label="Dynamic input"><svg width="20" height="20"><path class="w" d="M4.500 1v9M0 5.500h9"/><path class="fw" d="M7 12h13v6H7z"/><path fill="#3b4453" d="M8 13h2v4H8z"/></svg></button></div>
  <div class="sg near"><button aria-label="Ortho"><svg width="20" height="20"><path class="w" stroke-width="1.200" d="M.5 0v19H20M1 13.500h5.500V19"/></svg></button><button class="lit" aria-label="Polar tracking" aria-pressed="true"><svg width="20" height="20"><path fill="none" stroke="#fff" d="M17 12a8 8 0 1 1-3-9M9 10.500h11M9 10.500l7-8M15 7v7"/></svg></button><button class="dd" aria-label="Polar list"><i class="caret wide"></i></button><button aria-label="Isodraft"><svg width="20" height="20"><path stroke="#d86a72" stroke-width="1.200" d="M2 3l15 14"/><path stroke="#67d780" stroke-width="1.200" d="M9.500 0v20"/><path fill="#3b4453" stroke="#ddd" d="M7.500 8.500h4v4h-4z"/></svg></button><button class="dd" aria-label="Isodraft list"><i class="caret wide"></i></button></div>
  <div class="sg near"><button aria-label="Object snap tracking"><svg width="20" height="20"><path class="w" stroke-width="1.200" d="M15 2L1 17.500h19"/><circle class="fw" cx="8" cy="10" r="2"/></svg></button><button aria-label="Object snap"><svg width="20" height="20"><path class="w" d="M3.500 3.500h15v15h-15z"/><path fill="#3b4453" stroke="#d89a80" stroke-width="1.500" d="M1 1h5v5H1z"/></svg></button><button class="dd" aria-label="Object snap list"><i class="caret wide"></i></button></div>
  <div class="sg"><button class="lit" aria-label="Annotation visibility" aria-pressed="true"><svg width="22" height="20" fill="#fff"><use href="#annot" x="-2" width="20" height="20"/><circle fill="none" stroke="#fff" cx="17" cy="5" r="3.500"/></svg></button><button aria-label="Auto scale"><svg width="22" height="20" fill="#dcdcdc"><use href="#annot" x="-2" width="20" height="20"/><path d="M17 0l-4 6h3l-1 4 5-6h-3l2-4z"/></svg></button><button aria-label="Annotation scale"><svg width="20" height="20" fill="#dcdcdc"><use href="#annot"/></svg></button><button class="scale">1:1<i class="caret wide"></i></button></div>
  <div class="sg"><button aria-label="Workspace"><svg width="20" height="20"><circle cx="10" cy="10" r="5.500" fill="none" stroke="#dcdcdc" stroke-width="4"/><circle cx="10" cy="10" r="8.500" fill="none" stroke="#dcdcdc" stroke-width="3" stroke-dasharray="3.300 3.370"/></svg></button><button class="dd" aria-label="Workspace list"><i class="caret wide"></i></button></div>
  <div class="sg near"><button aria-label="Annotation monitor"><svg width="20" height="20"><path class="fw" d="M9 0h2v9h9v2h-9v9H9v-9H0V9h9z"/></svg></button></div>
  <div class="sg"><button aria-label="Isolate objects"><svg width="20" height="20"><path class="w" d="M.5 1.500h7v7h-7zM8 12.500l4.500 7h-9z"/><circle class="w" cx="15.500" cy="8.500" r="4"/></svg></button></div>
  <div class="sg thin"></div>
  <div class="sg"><button aria-label="Clean screen"><svg width="20" height="16"><path class="w" d="M.5.500h19v15H.5zM3 13l4-4M17 3l-4 4"/><path class="fw" d="M2 9v5h5zM18 7V2h-5z"/></svg></button></div>
  <div class="sg near"><button aria-label="Customization"><svg width="20" height="20"><path class="fw" d="M0 1h20v2H0zM0 9h20v2H0zM0 17h20v2H0z"/></svg></button></div>
</footer>
</body>
</html>
```
FILE: styles.css
```css
* { box-sizing: border-box; }

html, body { height: 100%; margin: 0; }

body {
  display: flex;
  flex-direction: column;
  min-width: 1900px;
  overflow: hidden;
  background: #222932;
  color: #f0f1f3;
  font: 14px/20px "Noto Sans", "Open Sans", sans-serif;
}

button, input, select {
  margin: 0;
  padding: 0;
  border: 0;
  background: none;
  color: inherit;
  font: inherit;
}

button {
  display: flex;
  align-items: center;
  justify-content: center;
  flex: none;
}

a { color: inherit; text-decoration: none; }
svg { display: block; flex: none; overflow: visible; }
.sprite { position: absolute; width: 0; height: 0; }
.grow { flex: 1; }

/* icon colours */
.w { fill: none; stroke: #d8dade; }
.b { fill: none; stroke: #64ade0; }
.n { fill: none; stroke: #43484f; }
.fw { fill: #dadada; }
.fb { fill: #7cc3f2; }
.fs { fill: #88c9fa; }
.fy { fill: #fccf74; }
.fr { fill: #e66868; }

/* drop-down triangles */
.caret {
  flex: none;
  width: 6px;
  height: 4px;
  background: #dfe1e4;
  clip-path: polygon(0 0, 100% 0, 50% 100%);
}
.caret.mid { width: 10px; height: 5px; }
.caret.wide { width: 10px; height: 5px; }
.caret.dim { background: #81868d; }
.caret.dark { background: #43484f; }

/* title bar */
.titlebar { display: flex; align-items: center; height: 35px; flex: none; padding-left: 17px; }
.logo { width: 30px; }
.logo-a { font: bold 17px "Open Sans", sans-serif; fill: #fff; }
.dd { width: 20px; align-self: stretch; }
.dd.tight { width: 15px; }
.logo-dd { margin-right: 3px; }
.qa { width: 30px; height: 30px; }
.share { gap: 7px; padding-left: 5px; color: #84c4f3; }
.doc-title { display: flex; flex: 1; justify-content: center; gap: 20px; padding: 1px 0 0 6px; }
.search-toggle { width: 14px; margin-right: 4px; }
.search { width: 223px; height: 26px; padding: 0 4px; background: #475063; font-style: italic; }
.search::placeholder { color: #bfc3cb; opacity: 1; }
.user { width: 150px; gap: 7px; justify-content: flex-start; margin-left: 5px; }
.user .caret { margin-left: auto; margin-right: 11px; }
.cart { width: 24px; }
.apps { width: 42px; gap: 8px; padding-left: 8px; justify-content: flex-start; }
.sep { width: 1px; height: 22px; margin: 0 5px 0 12px; background: #4a515c; }
.help-q { font: 15px "Noto Sans", sans-serif; fill: #333; }
.titlebar > .grow { flex: 0 0 79px; }
.win { width: 57px; height: 34px; }

/* ribbon tabs */
.tabs { display: flex; height: 30px; flex: none; padding: 5px 0 0 4px; color: #b4b8be; }
.tabs a { padding: 3px 12px 2px; }
.tabs a.on { background: #3b4453; color: #f4f5f6; }
.ribbon-toggle { gap: 5px; margin-left: 25px; padding-top: 2px; }

/* ribbon */
.ribbon { display: flex; flex: none; height: 124px; padding-left: 1px; background: #3b4453; }
.panel { display: flex; flex-direction: column; flex: none; padding-top: 4px; border-right: 1px solid #252c37; }
.panel .body { display: grid; height: 93px; justify-content: start; }
.panel footer { display: flex; align-items: center; height: 27px; padding-top: 4px; }
.ttl { display: flex; align-items: center; flex: 1; justify-content: center; gap: 9px; text-align: center; }
.launch { width: 17px; height: 17px; }
.big { flex-direction: column; justify-content: flex-start; padding-top: 4px; white-space: nowrap; height: 93px; }
.big svg { margin-bottom: 5px; }
.big .caret { margin-top: 3px; }
.row { display: flex; align-items: center; height: 31px; }
.ib { width: 26px; height: 28px; }
.ib.s { width: 20px; }
.lb { justify-content: flex-start; gap: 7px; }

.draw { width: 279px; }
.draw .body { grid-template-columns: 54px 54px 66px 52px 46px; }
.modify { width: 272px; }
.modify .body { grid-template: repeat(3, 31px) / 91px 88px 23px 28px 20px; padding-left: 7px; align-items: center; }
.annotation { width: 185px; }
.annotation .body { grid-template-columns: 57px 80px 46px; }
.layers { width: 341px; }
.layers .body { grid-template-columns: 76px 1fr; justify-content: stretch; }
.block { width: 151px; }
.block .body { grid-template-columns: 51px 52px 46px; }
.properties { width: 277px; }
.properties .body { grid-template-columns: 78px 1fr; justify-content: stretch; }
.groups { width: 85px; }
.groups .body { grid-template-columns: 50px 30px; }
.utilities { width: 121px; }
.utilities .body { grid-template-columns: 88px 26px; }
.clipboard { width: 113px; }
.clipboard .body { grid-template-columns: 66px 40px; }
.clipboard .dd { width: 14px; }
.view { flex: 1; border: 0; }
.view .body { grid-template-columns: 76px; }
.view .ttl { flex: 0 0 62px; }

.combo { display: flex; align-items: center; height: 28px; margin: 2px 3px 1px 1px; padding-right: 1px; background: #4d586b; border: 1px solid #2b323e; }
.combo > svg { width: 78px; height: 24px; margin-left: 3px; }
.combo select { flex: 1; appearance: none; }
.chip { width: 18px; height: 18px; margin: 0 6px 0 -3px; background: #fff; }
.layer-icons { display: grid; grid-template: 31px 31px / repeat(5, 30px); }
.combo.prop { flex: 1; margin: 0 3px 0 2px; padding-left: 8px; }
.prop .chip { width: 20px; height: 20px; margin: 0 5px 0 0; }
.rule { width: 80px; height: 1px; margin-right: 3px; background: #eceef0; }
.wheel, .pi { flex: none; width: 20px; height: 20px; margin-left: 1px; }
.wheel { border-radius: 50%; background: conic-gradient(#fc8f3c 0 50deg, #fb7242 0 90deg, #e0466a 0 140deg, #9450f0 0 210deg, #3a9fe0 0 260deg, #47c79b 0 310deg, #fcc75a 0); }
.ib.active { width: 29px; height: 28px; background: #3f5f84; border: 1px solid #86c3f3; }
.groups .ib { width: 30px; }

/* drawing tabs */
.filetabs { display: flex; align-items: center; height: 38px; flex: none; padding: 2px 0 0 15px; border-bottom: 5px solid #3b4453; }
.burger { width: 30px; height: 28px; }
.slash { stroke: #565d68; fill: none; }
.filetabs .slash:nth-of-type(1) { margin: 0 9px 0 7px; }
.filetabs .start { width: 41px; }
.filetabs .fig { margin: 0 0 0 11px; width: 69px; }
.filetabs .current { display: flex; align-items: center; align-self: stretch; width: 115px; gap: 9px; margin: 1px 12px 0 0; padding-left: 21px; background: #3b4453; clip-path: polygon(11px 0, 100% 0, calc(100% - 11px) 100%, 0 100%); font-weight: bold; color: #fff; }
.plus { width: 18px; margin-right: 12px; }

/* drawing area */
.viewport { position: relative; flex: 1; }
.vp-head { display: flex; justify-content: space-between; padding: 6px 10px 0 4px; }
.vp-win { display: flex; gap: 11px; padding-top: 3px; }
.cones { position: absolute; left: 934px; top: 120px; }
.axis { font: 200 19px "DejaVu Sans Light", "DejaVu Sans", sans-serif; fill: #d4d6d9; text-anchor: middle; }
.crosshair { position: absolute; left: 1441px; top: 320px; }
.viewcube { position: absolute; right: 12px; top: 68px; display: flex; flex-direction: column; align-items: center; }
.compass { font: bold 16px "Open Sans", sans-serif; fill: #b4b6b9; text-anchor: middle; }
.compass .near { font-size: 24px; }
.face { font: bold 10px Roboto, sans-serif; fill: #4c4c4c; text-anchor: middle; }
.unnamed { height: 21px; width: 82px; gap: 6px; margin-top: 10px; border-radius: 5px; background: #9a9dab; border: 1px solid #b1b4c0; color: #6a6d7b; font-size: 12px; font-weight: 600; }

.navbar { position: absolute; right: 2px; top: 259px; width: 40px; height: 259px; display: flex; flex-direction: column; align-items: center; border-radius: 4px; background: #5a5f67; box-shadow: 0 0 0 2px #1a1f28; }
.navbar button { flex-direction: column; width: 40px; }
.knob { align-self: flex-end; margin: 1px 2px; }
.wheelnav { gap: 9px; margin-top: 10px; padding-bottom: 6px; border-bottom: 1px solid #6d727a; }
.pan { margin-top: 4px; }
.zoomext { margin-top: 5px; gap: 8px; }
.orbit { margin-top: 6px; gap: 8px; padding-bottom: 6px; border-bottom: 1px solid #6d727a; }
.motion { margin: 4px 0 auto; }

/* command line */
.command { position: absolute; left: 8%; right: 8%; bottom: 0; display: flex; align-items: center; height: 33px; padding-left: 5px; background: #2a303b; }
.cx { width: 26px; margin-left: 1px; }
.cw { width: 32px; }
.cmdbox { flex: 1; display: flex; align-items: center; height: 32px; padding: 0 4px 0 5px; border-radius: 2px; background: #bcbdbf; }
.cmdbox button { gap: 2px; }
.caret.cmdc { width: 10px; height: 6px; background: #5c5e61; }
.cmdbox input { flex: 1; padding-left: 9px; font: italic 15px "DejaVu Sans Mono", monospace; color: #5c5e61; }
.cmdbox input::placeholder { color: #66686b; opacity: 1; font-style: italic; }

/* status bar */
.statusbar { display: flex; align-items: center; height: 39px; flex: none; padding: 0 2px 0 15px; border-top: 5px solid #3b4453; }
.statusbar > .burger { margin-bottom: 4px; }
.model-tab { width: 86px; height: 30px; margin: 0 9px 4px 6px; line-height: 31px; text-align: center; font-weight: bold; color: #fff; background: #3b4453; clip-path: polygon(11px 0, 100% 0, calc(100% - 11px) 100%, 0 100%); }
.a3 { width: 29px; margin-bottom: 4px; }
.statusbar > .plus { margin: 0 11px 4px 12px; }
.statusbar > .slash { margin-bottom: 4px; }
.sg { display: flex; align-items: center; height: 31px; margin-left: 3px; background: #3b4453; }
.sg.near { margin-left: 1px; }
.sg.thin { width: 4px; }
.sg button { width: 30px; height: 28px; }
.sg .dd { width: 20px; }
.sg .model { width: 59px; font-size: 15px; }
.sg .scale { width: 42px; gap: 5px; }
.sg .lit { width: 28px; margin: 0 1px; background: #5f8fc3; }
```
